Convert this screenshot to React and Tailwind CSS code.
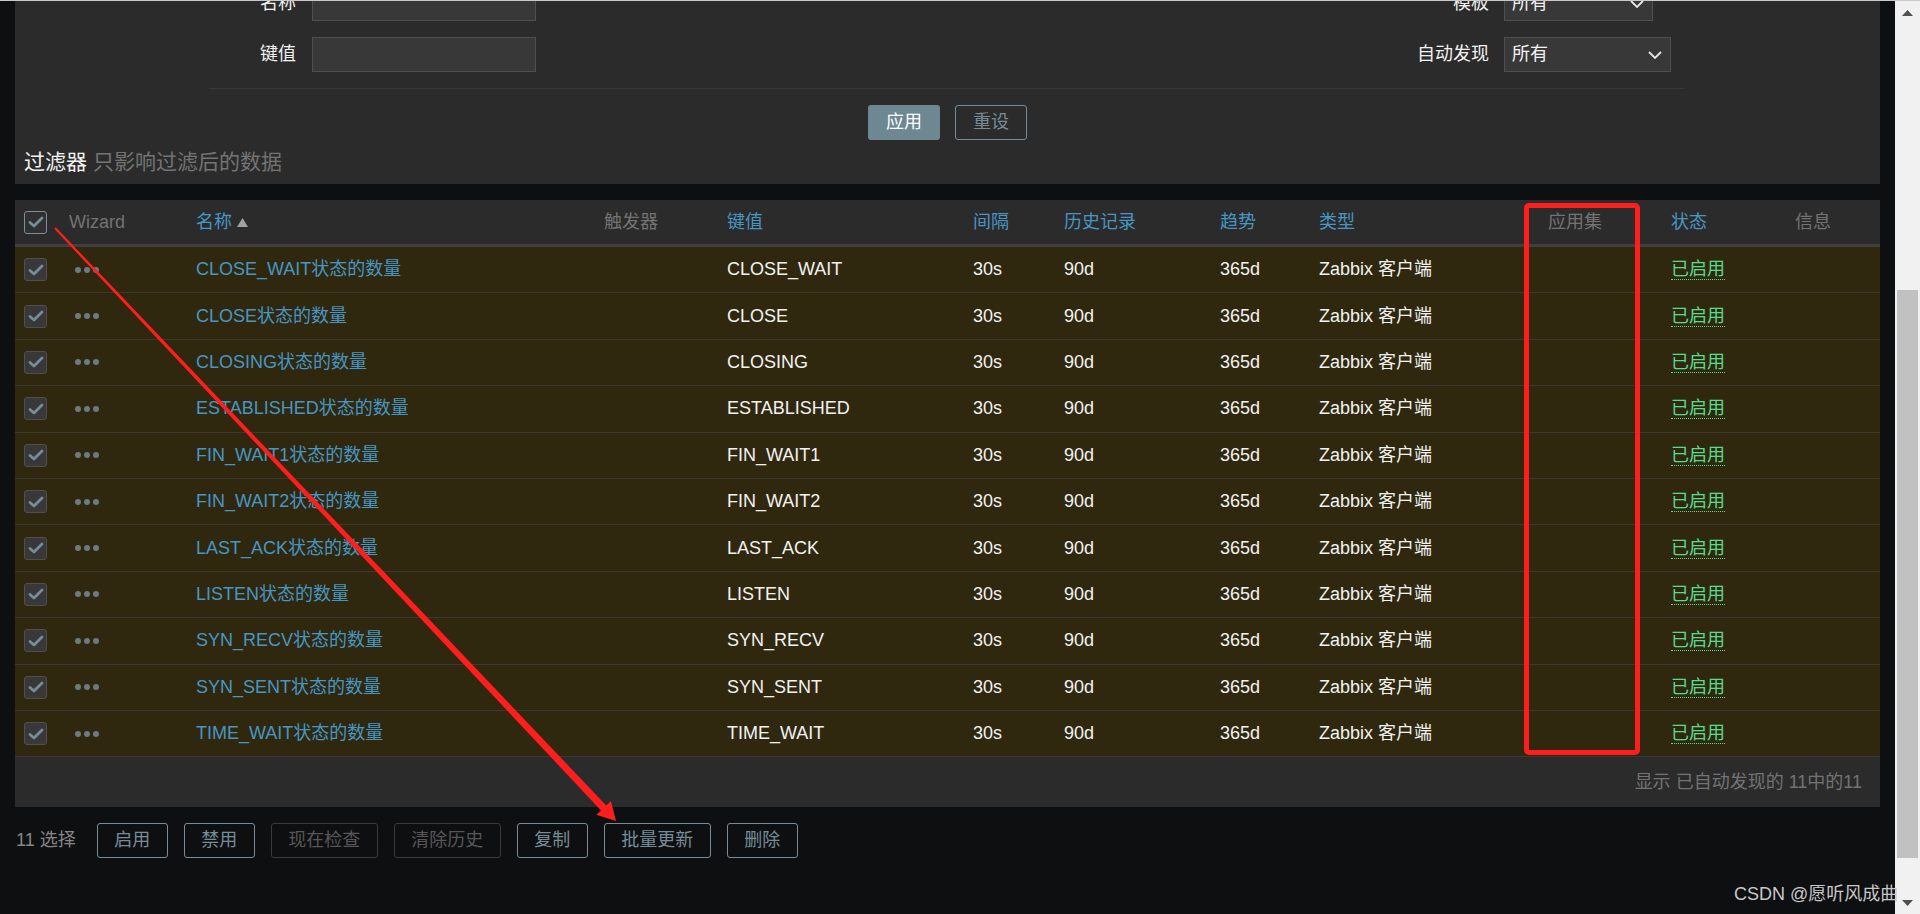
const keys = [
  "CLOSE_WAIT",
  "CLOSE",
  "CLOSING",
  "ESTABLISHED",
  "FIN_WAIT1",
  "FIN_WAIT2",
  "LAST_ACK",
  "LISTEN",
  "SYN_RECV",
  "SYN_SENT",
  "TIME_WAIT",
]

const W = [
  "w-[54px]",
  "w-[127px]",
  "w-[408px]",
  "w-[123px]",
  "w-[246px]",
  "w-[91px]",
  "w-[156px]",
  "w-[99px]",
  "w-[229px]",
  "w-[123px]",
  "w-[124px]",
  "w-[85px]",
]

const Check = ({ head }) => (
  <span
    className={`flex h-[23px] w-[23px] items-center justify-center rounded-[3px] border ${
      head ? "border-[#7b909b] bg-[#303030]" : "border-[#4f4f4f] bg-[#383838]"
    }`}
  >
    <svg width="16" height="12" viewBox="0 0 16 12">
      <path d="M2 6.5 L6 10 L14 2" fill="none" stroke="#768d99" strokeWidth="2.8" strokeLinecap="round" strokeLinejoin="round" />
    </svg>
  </span>
)

const Chevron = () => (
  <svg width="14" height="8" viewBox="0 0 14 8">
    <path d="M1 1 L7 7 L13 1" fill="none" stroke="#e6e6e6" strokeWidth="1.8" />
  </svg>
)

const Select = ({ w }) => (
  <div className={`flex h-[35px] ${w} items-center justify-between border border-[#4f4f4f] bg-[#383838] pl-[7px] pr-[8px] text-[#f2f2f2]`}>
    <span>所有</span>
    <Chevron />
  </div>
)

const Head = ({ i, children, link }) => (
  <div className={`${W[i]} flex shrink-0 items-center ${link ? "text-[#4796c4]" : "text-[#737373]"}`}>{children}</div>
)

const Btn = ({ children, off, wide }) => (
  <button
    className={`h-[35px] rounded-[3px] border ${wide ? "w-[107px]" : "w-[71px]"} ${
      off ? "border-[#3a3a3a] text-[#575757]" : "border-[#768d99] text-[#768d99]"
    }`}
  >
    {children}
  </button>
)

const App = () => {
  return (
    <div className="relative flex h-[914px] w-[1920px] overflow-hidden bg-[#0e0f11] text-[18px] font-['Liberation_Sans','Noto_Sans_CJK_SC',sans-serif]">
      <div className="flex h-full w-[1895px] flex-col">
        {/* filter */}
        <div className="-mt-[14px] ml-[15px] w-[1865px] bg-[#2b2b2b]">
          <div className="ml-[194px] flex w-[1475px] flex-col gap-[16px] border-b border-[#383838] pb-[16px]">
            <div className="flex h-[35px] items-center">
              <div className="w-[87px] text-right text-[#f2f2f2]">名称</div>
              <div className="ml-[16px] h-[35px] w-[224px] border border-[#4f4f4f] bg-[#383838]"></div>
              <div className="ml-[853px] w-[100px] text-right text-[#f2f2f2]">模板</div>
              <div className="ml-[15px]">
                <Select w="w-[149px]" />
              </div>
            </div>
            <div className="flex h-[35px] items-center">
              <div className="w-[87px] text-right text-[#f2f2f2]">键值</div>
              <div className="ml-[16px] h-[35px] w-[224px] border border-[#4f4f4f] bg-[#383838]"></div>
              <div className="ml-[853px] w-[100px] text-right text-[#f2f2f2]">自动发现</div>
              <div className="ml-[15px]">
                <Select w="w-[167px]" />
              </div>
            </div>
          </div>
          <div className="mt-[16px] flex justify-center gap-[15px]">
            <button className="h-[35px] w-[72px] rounded-[3px] bg-[#6d8793] text-[#ffffff]">应用</button>
            <button className="h-[35px] w-[72px] rounded-[3px] border border-[#768d99] text-[#768d99]">重设</button>
          </div>
          <div className="mt-[10px] box-content h-[24px] pb-[10px] pl-[9px] text-[21px] leading-[24px]">
            <span className="text-[#f2f2f2]">过滤器</span>
            <span className="ml-[6px] text-[#737373]">只影响过滤后的数据</span>
          </div>
        </div>

        {/* table */}
        <div className="ml-[15px] mt-[16px] w-[1865px]">
          <div className="flex h-[47px] border-b-[3px] border-[#3f3f3f] bg-[#2b2b2b]">
            <div className={`${W[0]} flex shrink-0 items-center pl-[9px]`}>
              <Check head />
            </div>
            <Head i={1}>Wizard</Head>
            <Head i={2} link>
              名称
              <svg className="ml-[5px]" width="11" height="9" viewBox="0 0 11 9">
                <path d="M5.5 0 L11 9 L0 9 Z" fill="#9ea3a6" />
              </svg>
            </Head>
            <Head i={3}>触发器</Head>
            <Head i={4} link>键值</Head>
            <Head i={5} link>间隔</Head>
            <Head i={6} link>历史记录</Head>
            <Head i={7} link>趋势</Head>
            <Head i={8} link>类型</Head>
            <Head i={9}>应用集</Head>
            <Head i={10} link>状态</Head>
            <Head i={11}>信息</Head>
          </div>

          {keys.map((k) => (
            <div key={k} className="flex h-[46.4px] border-b border-[#3c392f] bg-[#2f280e] text-[#f2f2f2]">
              <div className={`${W[0]} flex shrink-0 items-center pl-[9px]`}>
                <Check />
              </div>
              <div className={`${W[1]} flex shrink-0 items-center gap-[3px] pl-[6px]`}>
                <span className="h-[6px] w-[6px] rounded-full bg-[#6c7a82]"></span>
                <span className="h-[6px] w-[6px] rounded-full bg-[#6c7a82]"></span>
                <span className="h-[6px] w-[6px] rounded-full bg-[#6c7a82]"></span>
              </div>
              <div className={`${W[2]} flex shrink-0 items-center text-[#4796c4]`}>{k}状态的数量</div>
              <div className={`${W[3]} shrink-0`}></div>
              <div className={`${W[4]} flex shrink-0 items-center`}>{k}</div>
              <div className={`${W[5]} flex shrink-0 items-center`}>30s</div>
              <div className={`${W[6]} flex shrink-0 items-center`}>90d</div>
              <div className={`${W[7]} flex shrink-0 items-center`}>365d</div>
              <div className={`${W[8]} flex shrink-0 items-center`}>Zabbix 客户端</div>
              <div className={`${W[9]} shrink-0`}></div>
              <div className={`${W[10]} flex shrink-0 items-center`}>
                <span className="border-b border-dotted border-[#59db8f] leading-[20px] text-[#59db8f]">已启用</span>
              </div>
              <div className={`${W[11]} shrink-0`}></div>
            </div>
          ))}

          <div className="flex h-[50px] items-center justify-end bg-[#2b2b2b] pr-[18px] text-[#737373]">
            显示 已自动发现的 11中的11
          </div>
        </div>

        {/* action bar */}
        <div className="ml-[16px] mt-[16px] flex h-[35px] items-center">
          <span className="text-[#868686]">11 选择</span>
          <div className="ml-[21px] flex gap-[16px]">
            <Btn>启用</Btn>
            <Btn>禁用</Btn>
            <Btn off wide>现在检查</Btn>
            <Btn off wide>清除历史</Btn>
            <Btn>复制</Btn>
            <Btn wide>批量更新</Btn>
            <Btn>删除</Btn>
          </div>
        </div>
      </div>

      {/* scrollbar */}
      <div className="flex h-full w-[25px] flex-col bg-[#f1f1f1]">
        <div className="flex h-[20px] justify-center pt-[10px]">
          <svg width="11" height="6" viewBox="0 0 11 6">
            <path d="M5.5 0 L11 6 L0 6 Z" fill="#505050" />
          </svg>
        </div>
        <div className="ml-[2px] mt-[270px] h-[568px] w-[21px] bg-[#c1c1c1]"></div>
        <div className="mt-auto flex h-[20px] justify-center pt-[6px]">
          <svg width="11" height="6" viewBox="0 0 11 6">
            <path d="M0 0 L11 0 L5.5 6 Z" fill="#505050" />
          </svg>
        </div>
      </div>

      {/* top edge */}
      <div className="absolute left-0 right-0 top-0 h-[1px] bg-[#c9c9c9]"></div>

      {/* annotations */}
      <div className="pointer-events-none absolute left-[1524px] top-[203px] h-[552px] w-[116px] rounded-[5px] border-[5px] border-[#ff1e1e]"></div>
      <svg className="pointer-events-none absolute left-0 top-0" width="1920" height="914">
        <polygon
          points="54.2,228.8 601,810.4 596.3,814.8 616,821 610.9,801 606.2,805.4 55.8,227.2"
          fill="#ff1e1e"
        />
      </svg>

      <div className="pointer-events-none absolute left-[1734px] top-[883px] text-[18px] leading-[22px] text-[#c8c8c8]">
        CSDN @愿听风成曲
      </div>
    </div>
  )
}

export default App
